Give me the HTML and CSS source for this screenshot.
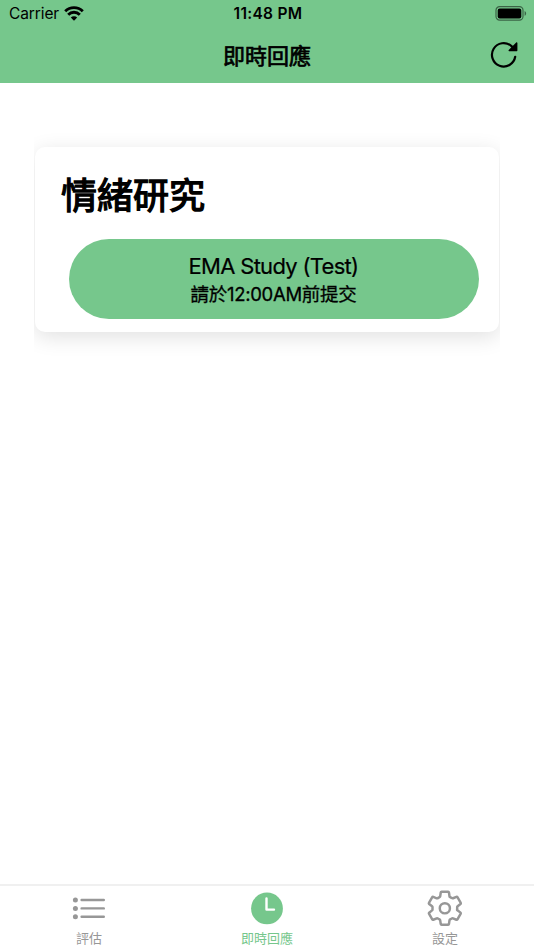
FILE: index.html
```html
<!DOCTYPE html>
<html lang="zh-Hant">
<head>
  <meta charset="UTF-8">
  <meta name="viewport" content="width=device-width, initial-scale=1.0">
  <title>即時回應</title>
  <link rel="stylesheet" href="styles.css">
</head>
<body>
  <header class="header">
    <div class="status-bar">
      <div class="carrier">
        <span>Carrier</span>
        <svg class="wifi" width="20" height="15" viewBox="0 0 20 15">
          <path d="M1.2 5.2a12.7 12.7 0 0 1 17.600 0M4.200 8.700a8.200 8.200 0 0 1 11.600 0" fill="none" stroke="#000" stroke-width="2.900"/>
          <path d="M10 14.800l-3.200-3.200a4.600 4.600 0 0 1 6.400 0z"/>
        </svg>
      </div>
      <div class="time">11:48 PM</div>
      <svg class="battery" width="32" height="15" viewBox="0 0 32 15">
        <rect x="1" y=".7" width="27" height="13.4" rx="3.6" fill="none" stroke="#000" stroke-opacity=".5" stroke-width="1.2"/>
        <rect x="2.7" y="2.4" width="23.6" height="10" rx="2"/>
        <path d="M29.6 5v4.8c2-.8 2-4 0-4.8z" fill-opacity=".5"/>
      </svg>
    </div>
    <div class="toolbar">
      <h1 class="title">即時回應</h1>
      <button class="refresh" aria-label="重新整理">
        <svg width="28" height="28" viewBox="0 0 28 28">
          <path d="M25.2 16.8A11.7 11.7 0 1 1 21.5 6.100L24 8.500" fill="none" stroke="#000" stroke-width="2.2" stroke-linecap="round"/>
          <path d="M27.400 3v7.500a.7.7 0 0 1-.7.7h-7.500c-.6 0-.9-.7-.5-1.100l7.500-7.600c.4-.4 1.200-.1 1.200.5z"/>
        </svg>
      </button>
    </div>
  </header>

  <main class="content">
    <div class="card-wrap">
      <section class="card">
        <h2 class="card-title">情緒研究</h2>
        <button class="study-btn">
          <span class="study-name">EMA Study (Test)</span>
          <span class="study-due">請於12:00AM前提交</span>
        </button>
      </section>
    </div>
  </main>

  <nav class="tabs">
    <a class="tab">
      <svg width="36" height="36" viewBox="0 0 36 36" fill="currentColor">
        <circle cx="4.4" cy="10" r="2.5"/>
        <circle cx="4.4" cy="18.4" r="2.5"/>
        <circle cx="4.4" cy="26.8" r="2.5"/>
        <path d="M10.600 10h22.200M10.600 18.4h22.200M10.600 26.8h22.200" stroke="currentColor" stroke-width="2.4" stroke-linecap="round"/>
      </svg>
      <span>評估</span>
    </a>
    <a class="tab active">
      <svg width="36" height="36" viewBox="0 0 36 36">
        <circle cx="18" cy="18.4" r="15.9" fill="currentColor"/>
        <path d="M17.5 8.400v11.200h7.500" fill="none" stroke="#fff" stroke-width="2.4" stroke-linecap="round" stroke-linejoin="round"/>
      </svg>
      <span>即時回應</span>
    </a>
    <a class="tab">
      <svg width="36" height="36" viewBox="24 18 468 468" fill="none" stroke="currentColor" stroke-width="32" stroke-linecap="round" stroke-linejoin="round">
        <circle cx="256" cy="256" r="66"/>
        <path d="M416.39 256a154.34 154.34 0 0 1-1.53 20.79l45.21 35.46a10.81 10.81 0 0 1 2.45 13.75l-42.77 74a10.81 10.81 0 0 1-13.14 4.59l-44.9-18.08a16.11 16.11 0 0 0-15.17 1.75A164.48 164.48 0 0 1 325 400.8a15.94 15.94 0 0 0-8.82 12.14l-6.73 47.89a11.08 11.08 0 0 1-10.68 9.17h-85.54a11.11 11.11 0 0 1-10.69-8.87l-6.72-47.82a16.07 16.07 0 0 0-9-12.22 155.3 155.3 0 0 1-21.46-12.57 16 16 0 0 0-15.11-1.71l-44.89 18.07a10.81 10.81 0 0 1-13.14-4.58l-42.77-74a10.8 10.8 0 0 1 2.45-13.75l38.21-30a16.05 16.05 0 0 0 6-14.08c-.36-4.17-.58-8.33-.58-12.5s.21-8.27.58-12.35a16 16 0 0 0-6.07-13.94l-38.19-30A10.81 10.81 0 0 1 49.48 186l42.77-74a10.81 10.81 0 0 1 13.14-4.59l44.9 18.08a16.11 16.11 0 0 0 15.17-1.75A164.48 164.48 0 0 1 187 111.2a15.94 15.94 0 0 0 8.82-12.14l6.73-47.89A11.08 11.08 0 0 1 213.23 42h85.54a11.11 11.11 0 0 1 10.69 8.87l6.72 47.82a16.07 16.07 0 0 0 9 12.22 155.3 155.3 0 0 1 21.46 12.57 16 16 0 0 0 15.11 1.71l44.89-18.07a10.81 10.81 0 0 1 13.14 4.58l42.77 74a10.8 10.8 0 0 1-2.45 13.75l-38.21 30a16.05 16.05 0 0 0-6.05 14.08c.33 4.14.55 8.3.55 12.47z"/>
      </svg>
      <span>設定</span>
    </a>
  </nav>
</body>
</html>
```

FILE: styles.css
```css
* {
  box-sizing: border-box;
}

body {
  margin: 0;
  height: 100vh;
  display: flex;
  flex-direction: column;
  background: #fff;
  color: #000;
  font-family: Inter, "Noto Sans CJK TC", sans-serif;
}

button {
  border: 0;
  padding: 0;
  color: inherit;
  font-family: inherit;
}

svg {
  display: block;
}

.header {
  height: 83px;
  background: #76c78c;
}

.status-bar {
  display: grid;
  grid-template-columns: 1fr auto 1fr;
  align-items: center;
  height: 27px;
  padding: 0 7px 0 9px;
}

.carrier {
  display: flex;
  align-items: center;
  gap: 5px;
  font-size: 15.5px;
  letter-spacing: -0.1px;
}

.time {
  font-size: 15.5px;
  font-weight: 600;
  letter-spacing: 0.3px;
}

.battery {
  justify-self: end;
}

.toolbar {
  display: grid;
  grid-template-columns: 1fr auto 1fr;
  align-items: center;
  height: 53px;
  padding: 0 16px;
}

.title {
  grid-column: 2;
  margin: 0;
  font-size: 22px;
  font-weight: 400;
  -webkit-text-stroke: 0.7px;
}

.refresh {
  justify-self: end;
  background: none;
}

.content {
  flex: 1;
  padding: 44px 34px 0;
}

/* the shadow is cut off at both sides */
.card-wrap {
  overflow: hidden;
  padding: 20px 1px 40px;
}

.card {
  height: 185px;
  padding: 23px 21px 0 26px;
  border-radius: 10px;
  background: #fff;
  box-shadow: 0 5px 21px rgba(0, 0, 0, 0.12);
}

.card-title {
  margin: 0;
  font-size: 36px;
  font-weight: 400;
  line-height: 52px;
  -webkit-text-stroke: 1.3px;
}

.study-btn {
  display: flex;
  flex-direction: column;
  align-items: center;
  width: 410px;
  height: 80px;
  margin: 17px 0 0 7.5px;
  padding-top: 12px;
  border-radius: 40px;
  background: #76c78c;
}

.study-name {
  font-size: 22px;
  line-height: 30px;
  letter-spacing: -0.7px;
  -webkit-text-stroke: 0.2px;
}

.study-due {
  font-size: 18.5px;
  line-height: 27px;
  letter-spacing: -0.3px;
  -webkit-text-stroke: 0.3px;
}

.tabs {
  display: grid;
  grid-template-columns: repeat(3, 1fr);
  height: 66px;
  border-top: 2px solid #f0f0f0;
}

.tab {
  display: flex;
  flex-direction: column;
  align-items: center;
  padding-top: 4px;
  color: #979797;
  font-size: 13px;
  line-height: 24px;
}

.tab.active {
  color: #76c78c;
}
```
